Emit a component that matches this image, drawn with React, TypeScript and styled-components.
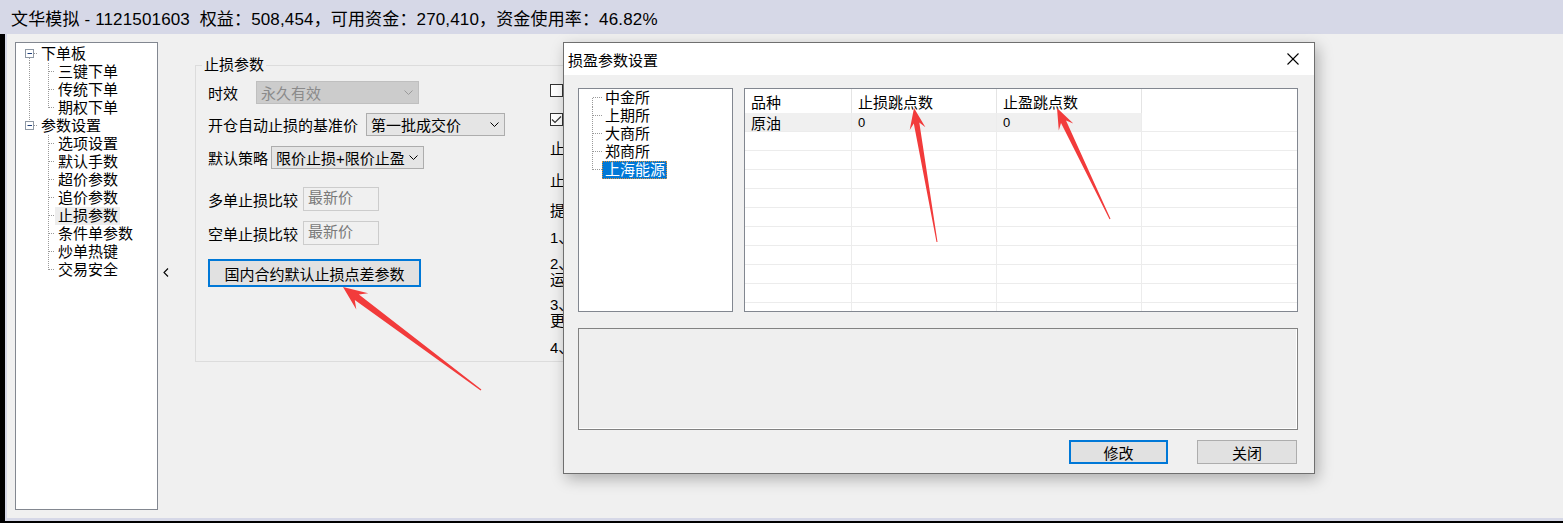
import React from "react";
import styled, { createGlobalStyle } from "styled-components";

const GlobalStyle = createGlobalStyle`
  html, body { margin: 0; padding: 0; background: #000; }
  body { font-family: "Liberation Sans", "Noto Sans CJK SC", sans-serif; color: #000; }
  * { box-sizing: border-box; }
`;

const Window = styled.div`
  position: relative;
  width: 1563px;
  height: 523px;
  overflow: hidden;
  background: #000;
  display: flex;
  flex-direction: column;
`;

const TitleBar = styled.div`
  height: 34px;
  flex: none;
  background: #d6d8e7;
  padding-left: 11px;
  display: flex;
  align-items: center;
  font-size: 17px;
  letter-spacing: 0.15px;
  white-space: pre;
`;

const Frame = styled.div`
  margin-left: 5px;
  height: 487px;
  flex: none;
  border-left: 2px solid #d6d8e7;
  border-bottom: 3px solid #d6d8e7;
  background: #f0f0f0;
  display: flex;
  padding: 8px 0 8px 8px;
`;

const TreePanel = styled.div`
  width: 143px;
  flex: none;
  background: #fff;
  border: 1px solid #828790;
  padding-top: 2px;
  font-size: 15px;
`;

const TreeRow = styled.div`
  display: flex;
  height: 18px;
  align-items: center;
`;

const TreeLabel = styled.span<{ $sel?: "focus" | "soft" }>`
  height: 18px;
  line-height: 18px;
  padding: 0 2px 0 3px;
  white-space: nowrap;
  overflow: hidden;
  background: ${(p) => (p.$sel === "focus" ? "#0078d7" : p.$sel === "soft" ? "#ededed" : "transparent")};
  color: ${(p) => (p.$sel === "focus" ? "#fff" : "#000")};
  outline: ${(p) => (p.$sel === "focus" ? "1px dotted #d98f3a" : "none")};
  outline-offset: -1px;
`;

const Dot = styled.line`
  stroke: #9a9a9a;
  stroke-width: 1;
  stroke-dasharray: 1 1;
  shape-rendering: crispEdges;
`;

const Handle = styled.div`
  width: 37px;
  flex: none;
  display: flex;
  align-items: center;
  padding: 0 0 8px 5px;
`;

const SettingsArea = styled.div`
  flex: 1;
  min-width: 0;
`;

const GroupBox = styled.fieldset`
  margin: 15px 0 0 0;
  padding: 0;
  width: 705px;
  height: 305px;
  border: 1px solid #dcdcdc;
  min-width: 0;
`;

const Legend = styled.legend`
  margin-left: 6px;
  padding: 0 2px;
  font-size: 15px;
  line-height: 16px;
`;

const GroupInner = styled.div`
  display: grid;
  grid-template-columns: 342px 1fr;
  padding: 8px 0 0 12px;
`;

const Col = styled.div`
  display: flex;
  flex-direction: column;
  align-items: flex-start;
  font-size: 15px;
  overflow: hidden;
`;

const FormRow = styled.div<{ $mt?: number }>`
  display: flex;
  align-items: center;
  margin-top: ${(p) => p.$mt ?? 0}px;
`;

const FieldLabel = styled.span<{ $w: number }>`
  width: ${(p) => p.$w}px;
  flex: none;
  white-space: nowrap;
`;

const Select = styled.div<{ $w: number; $disabled?: boolean }>`
  width: ${(p) => p.$w}px;
  height: 23px;
  display: flex;
  align-items: center;
  justify-content: space-between;
  padding: 0 5px 0 4px;
  border: 1px solid ${(p) => (p.$disabled ? "#bfbfbf" : "#adadad")};
  background: ${(p) => (p.$disabled ? "#cccccc" : "#e5e5e5")};
  color: ${(p) => (p.$disabled ? "#8a8a8a" : "#000")};
  white-space: nowrap;
`;

const TextBox = styled.div<{ $w: number }>`
  width: ${(p) => p.$w}px;
  height: 24px;
  padding: 1px 0 0 4px;
  line-height: 18px;
  border: 1px solid #cccccc;
  background: #f0f0f0;
  color: #7a7a7a;
`;

const PushButton = styled.button<{ $w: number; $h: number; $default?: boolean }>`
  width: ${(p) => p.$w}px;
  height: ${(p) => p.$h}px;
  font-family: inherit;
  font-size: 15px;
  color: #000;
  background: #e1e1e1;
  border: ${(p) => (p.$default ? "2px solid #0078d7" : "1px solid #adadad")};
  padding: 0;
  margin: 0;
`;

const CheckRow = styled.div<{ $mt?: number }>`
  display: flex;
  align-items: center;
  gap: 6px;
  height: 18px;
  margin-top: ${(p) => p.$mt ?? 0}px;
  white-space: nowrap;
`;

const CheckBox = styled.span`
  width: 13px;
  height: 13px;
  border: 1px solid #333;
  background: #fff;
  display: flex;
  align-items: center;
  justify-content: center;
`;

const TextLine = styled.div<{ $mt?: number; $lh?: number }>`
  margin-top: ${(p) => p.$mt ?? 0}px;
  line-height: ${(p) => p.$lh ?? 18}px;
  white-space: nowrap;
`;

const Dialog = styled.div`
  position: absolute;
  left: 563px;
  top: 42px;
  width: 752px;
  height: 432px;
  border: 1px solid #6f6f6f;
  background: #f0f0f0;
  box-shadow: 3px 5px 14px rgba(0, 0, 0, 0.28);
  display: flex;
  flex-direction: column;
`;

const DialogTitle = styled.div`
  height: 32px;
  flex: none;
  background: #fff;
  display: flex;
  align-items: center;
  justify-content: space-between;
  padding: 0 15px 0 4px;
  font-size: 15px;
`;

const DialogBody = styled.div`
  flex: 1;
  display: flex;
  flex-direction: column;
  padding: 13px 16px 9px 14px;
`;

const TopRow = styled.div`
  display: flex;
  gap: 11px;
  height: 224px;
`;

const ListBox = styled.div<{ $w?: number }>`
  ${(p) => (p.$w ? `width: ${p.$w}px; flex: none;` : "flex: 1;")}
  background: #fff;
  border: 1px solid #828790;
  overflow: hidden;
  font-size: 15px;
`;

const Grid = styled.div`
  display: grid;
  grid-template-columns: 107px 145px 145px 1fr;
  grid-template-rows: 24px;
  grid-auto-rows: 19px;
`;

const HeadCell = styled.div<{ $last?: boolean }>`
  display: flex;
  align-items: center;
  padding-left: 6px;
  border-right: ${(p) => (p.$last ? "none" : "1px solid #e4e4e4")};
  white-space: nowrap;
`;

const Cell = styled.div<{ $last?: boolean; $active?: boolean; $num?: boolean }>`
  display: flex;
  align-items: center;
  padding-left: 6px;
  border-right: ${(p) => (p.$last ? "none" : "1px solid #ececec")};
  border-bottom: 1px solid #ececec;
  background: ${(p) => (p.$active ? "#f0f0f0" : "#fff")};
  font-size: ${(p) => (p.$num ? 13 : 15)}px;
`;

const InfoBox = styled.div`
  margin-top: 16px;
  height: 102px;
  border: 1px solid #828282;
  box-shadow: inset -1px -1px 0 #fff;
  background: #efefef;
`;

const ButtonRow = styled.div`
  margin-top: 10px;
  display: flex;
  justify-content: flex-end;
  gap: 29px;
  padding-right: 1px;
`;

const Overlay = styled.svg`
  position: absolute;
  left: 0;
  top: 0;
  pointer-events: none;
`;

const Chevron = ({ color = "#000" }: { color?: string }) => (
  <svg width="9" height="5" viewBox="0 0 9 5">
    <polyline points="0.5,0.5 4.5,4.5 8.5,0.5" fill="none" stroke={color} strokeWidth="1" />
  </svg>
);

/* --- main tree --- */
type MainNode = { label: string; children: string[] };
const mainTree: MainNode[] = [
  { label: "下单板", children: ["三键下单", "传统下单", "期权下单"] },
  {
    label: "参数设置",
    children: ["选项设置", "默认手数", "超价参数", "追价参数", "止损参数", "条件单参数", "炒单热键", "交易安全"],
  },
];

const ParentGutter = ({ first, last }: { first: boolean; last: boolean }) => (
  <svg width="22" height="18" viewBox="0 0 22 18">
    {!first && <Dot x1="13.5" y1="0" x2="13.5" y2="4" />}
    {!last && <Dot x1="13.5" y1="13" x2="13.5" y2="18" />}
    <Dot x1="18" y1="8.5" x2="22" y2="8.5" />
    <rect x="9.5" y="4.5" width="8" height="8" fill="#fff" stroke="#8e98a4" />
    <line x1="11.5" y1="8.5" x2="16" y2="8.5" stroke="#20407a" />
  </svg>
);

const ChildGutter = ({ parentLast, last }: { parentLast: boolean; last: boolean }) => (
  <svg width="39" height="18" viewBox="0 0 39 18">
    {!parentLast && <Dot x1="13.5" y1="0" x2="13.5" y2="18" />}
    <Dot x1="32.5" y1="0" x2="32.5" y2={last ? 9 : 18} />
    <Dot x1="33" y1="8.5" x2="39" y2="8.5" />
  </svg>
);

const FlatGutter = ({ first, last }: { first: boolean; last: boolean }) => (
  <svg width="23" height="18" viewBox="0 0 23 18">
    <Dot x1="13.5" y1={first ? 9 : 0} x2="13.5" y2={last ? 9 : 18} />
    <Dot x1="14" y1="8.5" x2="23" y2="8.5" />
  </svg>
);

type Pt = [number, number];
const arrowPoints = (tail: Pt, tip: Pt, headLen: number, headHalf: number, neckHalf: number, tailHalf: number) => {
  const dx = tip[0] - tail[0];
  const dy = tip[1] - tail[1];
  const len = Math.hypot(dx, dy);
  const ux = dx / len;
  const uy = dy / len;
  const nx = -uy;
  const ny = ux;
  const bx = tip[0] - ux * headLen;
  const by = tip[1] - uy * headLen;
  const kx = tip[0] - ux * headLen * 0.72;
  const ky = tip[1] - uy * headLen * 0.72;
  const pts: Pt[] = [
    [tail[0] + nx * tailHalf, tail[1] + ny * tailHalf],
    [kx + nx * neckHalf, ky + ny * neckHalf],
    [bx + nx * headHalf, by + ny * headHalf],
    tip,
    [bx - nx * headHalf, by - ny * headHalf],
    [kx - nx * neckHalf, ky - ny * neckHalf],
    [tail[0] - nx * tailHalf, tail[1] - ny * tailHalf],
  ];
  return pts.map((p) => `${p[0].toFixed(1)},${p[1].toFixed(1)}`).join(" ");
};

const arrows = [
  arrowPoints([481, 390], [343, 287], 24, 10, 3.5, 0.6),
  arrowPoints([937, 242], [914, 108], 21, 8, 2.8, 0.5),
  arrowPoints([1110, 219], [1057, 108], 21, 8, 2.8, 0.5),
];

const exchanges = ["中金所", "上期所", "大商所", "郑商所", "上海能源"];

export default function App() {
  const bodyRows = Array.from({ length: 10 }, (_, i) => i);
  return (
    <>
      <GlobalStyle />
      <Window>
        <TitleBar>{"文华模拟 - 1121501603  权益：508,454，可用资金：270,410，资金使用率：46.82%"}</TitleBar>
        <Frame>
          <TreePanel>
            {mainTree.map((node, pi) => (
              <React.Fragment key={node.label}>
                <TreeRow>
                  <ParentGutter first={pi === 0} last={pi === mainTree.length - 1} />
                  <TreeLabel>{node.label}</TreeLabel>
                </TreeRow>
                {node.children.map((c, ci) => (
                  <TreeRow key={c}>
                    <ChildGutter parentLast={pi === mainTree.length - 1} last={ci === node.children.length - 1} />
                    <TreeLabel $sel={c === "止损参数" ? "soft" : undefined}>{c}</TreeLabel>
                  </TreeRow>
                ))}
              </React.Fragment>
            ))}
          </TreePanel>
          <Handle>
            <svg width="6" height="9" viewBox="0 0 6 9">
              <polyline points="5,0.5 1,4.5 5,8.5" fill="none" stroke="#000" strokeWidth="1.1" />
            </svg>
          </Handle>
          <SettingsArea>
            <GroupBox>
              <Legend>止损参数</Legend>
              <GroupInner>
                <Col>
                  <FormRow>
                    <FieldLabel $w={48}>时效</FieldLabel>
                    <Select $w={163} $disabled>
                      <span>永久有效</span>
                      <Chevron color="#9a9a9a" />
                    </Select>
                  </FormRow>
                  <FormRow $mt={9}>
                    <FieldLabel $w={158}>开仓自动止损的基准价</FieldLabel>
                    <Select $w={139}>
                      <span>第一批成交价</span>
                      <Chevron />
                    </Select>
                  </FormRow>
                  <FormRow $mt={10}>
                    <FieldLabel $w={63}>默认策略</FieldLabel>
                    <Select $w={153}>
                      <span>限价止损+限价止盈</span>
                      <Chevron />
                    </Select>
                  </FormRow>
                  <FormRow $mt={18}>
                    <FieldLabel $w={95}>多单止损比较</FieldLabel>
                    <TextBox $w={76}>最新价</TextBox>
                  </FormRow>
                  <FormRow $mt={10}>
                    <FieldLabel $w={95}>空单止损比较</FieldLabel>
                    <TextBox $w={76}>最新价</TextBox>
                  </FormRow>
                  <FormRow $mt={14}>
                    <PushButton $w={213} $h={28} $default>
                      国内合约默认止损点差参数
                    </PushButton>
                  </FormRow>
                </Col>
                <Col>
                  <CheckRow>
                    <CheckBox />
                    <span>止盈</span>
                  </CheckRow>
                  <CheckRow $mt={11}>
                    <CheckBox>
                      <svg width="11" height="9" viewBox="0 0 11 9">
                        <polyline points="1,4.5 4,7.5 10,1.5" fill="none" stroke="#333" strokeWidth="1.2" />
                      </svg>
                    </CheckBox>
                    <span>追踪</span>
                  </CheckRow>
                  <TextLine $mt={12}>止损价</TextLine>
                  <TextLine $mt={14}>止盈价</TextLine>
                  <TextLine $mt={12}>提示：</TextLine>
                  <TextLine $mt={9}>1、本地</TextLine>
                  <TextLine $mt={9} $lh={16}>2、触发</TextLine>
                  <TextLine $lh={16}>运行中</TextLine>
                  <TextLine $mt={9} $lh={16}>3、修改</TextLine>
                  <TextLine $lh={16}>更新后</TextLine>
                  <TextLine $mt={10}>4、网络</TextLine>
                </Col>
              </GroupInner>
            </GroupBox>
          </SettingsArea>
        </Frame>

        <Dialog>
          <DialogTitle>
            <span>损盈参数设置</span>
            <svg width="12" height="12" viewBox="0 0 12 12">
              <line x1="0.5" y1="0.5" x2="11.5" y2="11.5" stroke="#000" strokeWidth="1.1" />
              <line x1="11.5" y1="0.5" x2="0.5" y2="11.5" stroke="#000" strokeWidth="1.1" />
            </svg>
          </DialogTitle>
          <DialogBody>
            <TopRow>
              <ListBox $w={155}>
                {exchanges.map((e, i) => (
                  <TreeRow key={e}>
                    <FlatGutter first={i === 0} last={i === exchanges.length - 1} />
                    <TreeLabel $sel={e === "上海能源" ? "focus" : undefined}>{e}</TreeLabel>
                  </TreeRow>
                ))}
              </ListBox>
              <ListBox>
                <Grid>
                  <HeadCell>品种</HeadCell>
                  <HeadCell>止损跳点数</HeadCell>
                  <HeadCell>止盈跳点数</HeadCell>
                  <HeadCell $last />
                  <Cell $active>原油</Cell>
                  <Cell $active $num>0</Cell>
                  <Cell $active $num>0</Cell>
                  <Cell $last />
                  {bodyRows.map((r) => (
                    <React.Fragment key={r}>
                      <Cell />
                      <Cell />
                      <Cell />
                      <Cell $last />
                    </React.Fragment>
                  ))}
                </Grid>
              </ListBox>
            </TopRow>
            <InfoBox />
            <ButtonRow>
              <PushButton $w={99} $h={24} $default>
                修改
              </PushButton>
              <PushButton $w={100} $h={24}>
                关闭
              </PushButton>
            </ButtonRow>
          </DialogBody>
        </Dialog>

        <Overlay width="1563" height="523" viewBox="0 0 1563 523">
          {arrows.map((pts, i) => (
            <polygon key={i} points={pts} fill="#f23b3b" />
          ))}
        </Overlay>
      </Window>
    </>
  );
}
